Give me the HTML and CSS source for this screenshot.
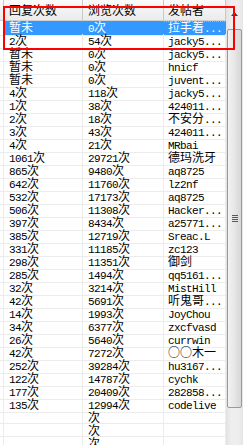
FILE: index.html
```html
<!DOCTYPE html>
<html lang="zh">
<head>
<meta charset="utf-8">
<link rel="stylesheet" href="styles.css">
</head>
<body>
<div class="listview">
  <div class="grid">
    <div class="row head"><div class="c c0"></div><div class="c c1">回复次数</div><div class="c c2">浏览次数</div><div class="c c3">发帖者</div></div>
    <div class="row sel"><div class="c c0"></div><div class="c c1">暂未</div><div class="c c2"><span class="n">0</span>次</div><div class="c c3">拉手着<span class="n">...</span></div></div>
    <div class="row"><div class="c c0"></div><div class="c c1"><span class="n">2</span>次</div><div class="c c2"><span class="n">54</span>次</div><div class="c c3"><span class="n">jacky5...</span></div></div>
    <div class="row"><div class="c c0"></div><div class="c c1">暂未</div><div class="c c2"><span class="n">0</span>次</div><div class="c c3"><span class="n">jacky5...</span></div></div>
    <div class="row"><div class="c c0"></div><div class="c c1">暂未</div><div class="c c2"><span class="n">0</span>次</div><div class="c c3"><span class="n">hnicf</span></div></div>
    <div class="row"><div class="c c0"></div><div class="c c1">暂未</div><div class="c c2"><span class="n">0</span>次</div><div class="c c3"><span class="n">juvent...</span></div></div>
    <div class="row"><div class="c c0"></div><div class="c c1"><span class="n">4</span>次</div><div class="c c2"><span class="n">118</span>次</div><div class="c c3"><span class="n">jacky5...</span></div></div>
    <div class="row"><div class="c c0"></div><div class="c c1"><span class="n">1</span>次</div><div class="c c2"><span class="n">38</span>次</div><div class="c c3"><span class="n">424011...</span></div></div>
    <div class="row"><div class="c c0"></div><div class="c c1"><span class="n">2</span>次</div><div class="c c2"><span class="n">18</span>次</div><div class="c c3">不安分<span class="n">...</span></div></div>
    <div class="row"><div class="c c0"></div><div class="c c1"><span class="n">3</span>次</div><div class="c c2"><span class="n">43</span>次</div><div class="c c3"><span class="n">424011...</span></div></div>
    <div class="row"><div class="c c0"></div><div class="c c1"><span class="n">4</span>次</div><div class="c c2"><span class="n">21</span>次</div><div class="c c3"><span class="n">MRbai</span></div></div>
    <div class="row"><div class="c c0"></div><div class="c c1"><span class="n">1061</span>次</div><div class="c c2"><span class="n">29721</span>次</div><div class="c c3">德玛洗牙</div></div>
    <div class="row"><div class="c c0"></div><div class="c c1"><span class="n">865</span>次</div><div class="c c2"><span class="n">9480</span>次</div><div class="c c3"><span class="n">aq8725</span></div></div>
    <div class="row"><div class="c c0"></div><div class="c c1"><span class="n">642</span>次</div><div class="c c2"><span class="n">11760</span>次</div><div class="c c3"><span class="n">lz2nf</span></div></div>
    <div class="row"><div class="c c0"></div><div class="c c1"><span class="n">532</span>次</div><div class="c c2"><span class="n">17173</span>次</div><div class="c c3"><span class="n">aq8725</span></div></div>
    <div class="row"><div class="c c0"></div><div class="c c1"><span class="n">506</span>次</div><div class="c c2"><span class="n">11308</span>次</div><div class="c c3"><span class="n">Hacker...</span></div></div>
    <div class="row"><div class="c c0"></div><div class="c c1"><span class="n">397</span>次</div><div class="c c2"><span class="n">8434</span>次</div><div class="c c3"><span class="n">a25771...</span></div></div>
    <div class="row"><div class="c c0"></div><div class="c c1"><span class="n">385</span>次</div><div class="c c2"><span class="n">12719</span>次</div><div class="c c3"><span class="n">Sreac.L</span></div></div>
    <div class="row"><div class="c c0"></div><div class="c c1"><span class="n">331</span>次</div><div class="c c2"><span class="n">11185</span>次</div><div class="c c3"><span class="n">zc123</span></div></div>
    <div class="row"><div class="c c0"></div><div class="c c1"><span class="n">298</span>次</div><div class="c c2"><span class="n">11351</span>次</div><div class="c c3">御剑</div></div>
    <div class="row"><div class="c c0"></div><div class="c c1"><span class="n">285</span>次</div><div class="c c2"><span class="n">1494</span>次</div><div class="c c3"><span class="n">qq5161...</span></div></div>
    <div class="row"><div class="c c0"></div><div class="c c1"><span class="n">32</span>次</div><div class="c c2"><span class="n">3214</span>次</div><div class="c c3"><span class="n">MistHill</span></div></div>
    <div class="row"><div class="c c0"></div><div class="c c1"><span class="n">42</span>次</div><div class="c c2"><span class="n">5691</span>次</div><div class="c c3">听鬼哥<span class="n">...</span></div></div>
    <div class="row"><div class="c c0"></div><div class="c c1"><span class="n">14</span>次</div><div class="c c2"><span class="n">1993</span>次</div><div class="c c3"><span class="n">JoyChou</span></div></div>
    <div class="row"><div class="c c0"></div><div class="c c1"><span class="n">34</span>次</div><div class="c c2"><span class="n">6377</span>次</div><div class="c c3"><span class="n">zxcfvasd</span></div></div>
    <div class="row"><div class="c c0"></div><div class="c c1"><span class="n">26</span>次</div><div class="c c2"><span class="n">5640</span>次</div><div class="c c3"><span class="n">currwin</span></div></div>
    <div class="row"><div class="c c0"></div><div class="c c1"><span class="n">42</span>次</div><div class="c c2"><span class="n">7272</span>次</div><div class="c c3">○○木一</div></div>
    <div class="row"><div class="c c0"></div><div class="c c1"><span class="n">252</span>次</div><div class="c c2"><span class="n">39284</span>次</div><div class="c c3"><span class="n">hu3167...</span></div></div>
    <div class="row"><div class="c c0"></div><div class="c c1"><span class="n">122</span>次</div><div class="c c2"><span class="n">14787</span>次</div><div class="c c3"><span class="n">cychk</span></div></div>
    <div class="row"><div class="c c0"></div><div class="c c1"><span class="n">177</span>次</div><div class="c c2"><span class="n">20409</span>次</div><div class="c c3"><span class="n">282858...</span></div></div>
    <div class="row"><div class="c c0"></div><div class="c c1"><span class="n">135</span>次</div><div class="c c2"><span class="n">12994</span>次</div><div class="c c3"><span class="n">codelive</span></div></div>
    <div class="row"><div class="c c0"></div><div class="c c1"></div><div class="c c2">次</div><div class="c c3"></div></div>
    <div class="row"><div class="c c0"></div><div class="c c1"></div><div class="c c2">次</div><div class="c c3"></div></div>
    <div class="row"><div class="c c0"></div><div class="c c1"></div><div class="c c2">次</div><div class="c c3"></div></div>
  </div>
  <div class="vscroll">
    <div class="btn-up"><svg width="7" height="4" viewBox="0 0 7 4"><path d="M0 4 L3.5 0 L7 4 Z" fill="#3c3c3c"/></svg></div>
    <div class="track"><div class="thumb"><span class="grip"></span></div></div>
  </div>
  <div class="mark"></div>
</div>
</body>
</html>
```

FILE: styles.css
```css
html, body {
  margin: 0;
  padding: 0;
  background: #fff;
}
body {
  font-family: "Noto Sans CJK SC", "Noto Sans CJK JP", sans-serif;
  color: #000;
}
.listview {
  position: relative;
  display: flex;
  width: 243px;
  height: 445px;
  overflow: hidden;
}
.grid {
  flex: none;
  width: 226px;
}
.row {
  display: grid;
  grid-template-columns: 4px 79px 81px 62px;
  height: 13px;
}
.c {
  position: relative;
  border-right: 1px solid #ececec;
  border-bottom: 1px solid #ececec;
  font-size: 12px;
  line-height: 12px;
  padding-left: 5px;
  white-space: nowrap;
  color: #000;
}
.c0 { padding: 0; }
.c3 { padding-left: 4px; }
.n {
  font-family: "Liberation Mono", monospace;
  font-size: 11px;
  line-height: 12px;
  letter-spacing: -0.6px;
}
.head { height: 21px; }
.head .c {
  background: linear-gradient(#fbfbfb, #ebebeb);
  border-right-color: #c9c9c9;
  border-bottom-color: #d0d0d0;
  line-height: 20px;
}
.sel .c1, .sel .c2, .sel .c3 {
  background: #3399ff;
  border-right-color: #3399ff;
  color: #fff;
}
.sel .c3::before {
  content: "";
  position: absolute;
  left: 0;
  right: 0;
  top: 0;
  border-top: 1px dotted #f0a45c;
}
.vscroll {
  flex: none;
  width: 17px;
  display: flex;
  flex-direction: column;
  background: linear-gradient(90deg, #e2e2e2, #eeeeee 30%, #eeeeee 70%, #e6e6e6);
}
.btn-up {
  height: 24px;
  display: flex;
  justify-content: center;
  align-items: flex-start;
  padding-top: 12px;
  box-sizing: border-box;
  padding-right: 1px;
}
.btn-up svg { display: block; }
.track {
  flex: 1;
  padding: 5px 1px 0 1px;
}
.thumb {
  height: 379px;
  box-sizing: border-box;
  border: 1px solid #9a9a9a;
  border-radius: 2px;
  background: linear-gradient(90deg, #f2f2f2, #e6e6e6 50%, #d6d6d6);
  display: flex;
  align-items: center;
  justify-content: center;
}
.grip {
  width: 6px;
  height: 7px;
  background: repeating-linear-gradient(#5a5a5a 0 1px, transparent 1px 2px);
}
.mark {
  position: absolute;
  left: 3px;
  top: 6px;
  width: 232px;
  height: 44px;
  box-sizing: border-box;
  border: 2px solid #f00;
}
```
